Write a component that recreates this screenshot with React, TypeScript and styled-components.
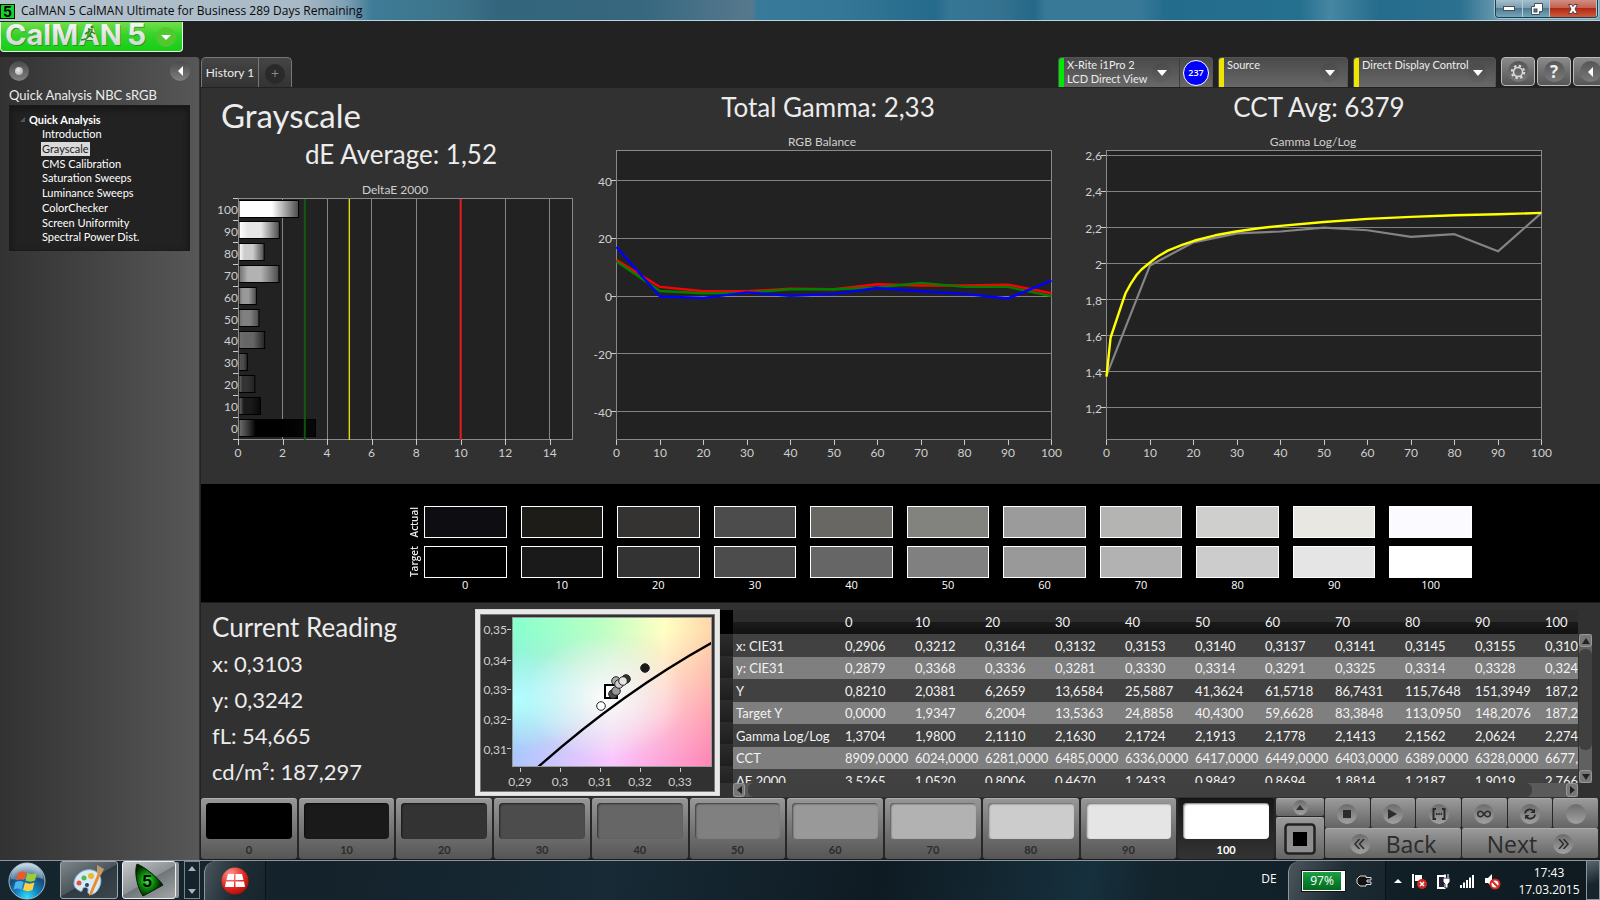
import React from "react";
import styled, { createGlobalStyle } from "styled-components";

const Global = createGlobalStyle`
  *, *::before, *::after { box-sizing: border-box; }
  body { margin: 0; background: #222; color: #ececec; font-family: Lato, "Liberation Sans", sans-serif; font-size: 13px; overflow-x: hidden; }
  button { font: inherit; color: inherit; border: 0; padding: 0; margin: 0; background: none; cursor: pointer; }
  h1, h2, p { margin: 0; font-weight: 400; }
  svg { display: block; flex-shrink: 0; }
`;

const system = `"Open Sans", "Noto Sans", sans-serif`;
const LEVELS = [0, 10, 20, 30, 40, 50, 60, 70, 80, 90, 100];
const GRAYS = ["#000", "#1a1a1a", "#333", "#4c4c4c", "#666", "#808080", "#999", "#b2b2b2", "#ccc", "#e5e5e5", "#fff"];
const ACTUAL = ["#0d0d12", "#1d1c19", "#353331", "#4c4c4c", "#686764", "#82827f", "#9b9b9b", "#b4b4b3", "#cfcfcd", "#e8e7e2", "#fafaff"];

/* ---------- frame ---------- */
const Page = styled.div`
  min-height: 100vh; display: flex; flex-direction: column; overflow: hidden;
`;
const TitleBar = styled.header`
  height: 22px; display: flex; align-items: flex-start; justify-content: space-between;
  border-bottom: 1px solid #222; box-shadow: inset 0 -1px #b8d3df;
  background:
    radial-gradient(ellipse at 404px 18px, rgba(160,127,116,.8) 0, rgba(160,127,116,0) 16px),
    linear-gradient(90deg, #b4c2cc 0, #a9bac6 300px, #7fa0b4 345px, #3f7c97 372px, #3c7289 460px, #33657d 500px, #36677f 640px, #57798e 752px, #377a9a 757px, #357797 840px, #256b8b 935px, #367796 950px, #34728f 1000px, #256888 1035px, #387997 1045px, #387998 1140px, #246c8c 1165px, #26708f 1300px, #4687a3 1330px, #256b8b 1380px, #2c7190 1460px, #6d9bb1 1500px, #7da7ba 100%);
`;
const WindowTitle = styled.h1`
  display: flex; align-items: center; gap: 6px; height: 21px; color: #08080c;
  font: 400 12px/21px ${system};
`;
const WindowButtons = styled.div`
  display: flex; height: 18px; margin-right: 2px; border: 1px solid #173f52; border-top: 0;
  border-radius: 0 0 4px 4px; overflow: hidden; box-shadow: 0 0 0 1px #a5c3d2;
`;
const WindowButton = styled.button<{ $close?: boolean }>`
  width: ${p => (p.$close ? 47 : 27)}px; display: grid; place-items: center;
  border-right: 1px solid #b4cbd6;
  background: ${p => p.$close
    ? "linear-gradient(#cf8f83 0, #c56150 45%, #b02a16 50%, #d05a3a 100%)"
    : "linear-gradient(#a5bfcc 0, #7c9fb1 45%, #4f7c93 50%, #76a6b8 100%)"};
`;
const Brand = styled.div`
  height: 35px; background: #222;
`;
const LogoButton = styled.button`
  width: 183px; height: 30px; display: flex; align-items: center; gap: 7px; padding-left: 4px;
  border: 1px solid #eaf8e6; border-top: 0; border-radius: 0 0 4px 4px;
  background: linear-gradient(#74de4a, #35d22a 45%, #14cf14);
`;
const Body = styled.div`
  flex: 1; display: grid; grid-template-columns: 200px minmax(0, 1fr); gap: 1px;
`;

/* ---------- sidebar ---------- */
const Sidebar = styled.aside`
  padding: 4px 9px; border-top-right-radius: 4px; border-right: 1px solid #333;
  background: linear-gradient(90deg, #323232, #575757);
`;
const SideTop = styled.div`
  display: flex; justify-content: space-between;
`;
const Knob = styled.button`
  width: 20px; height: 20px; border-radius: 50%; display: grid; place-items: center;
  background: linear-gradient(#4a4a4a, #808080);
`;
const Bead = styled.i`
  width: 8px; height: 8px; border-radius: 50%; background: radial-gradient(circle at 40% 40%, #eee, #999);
`;
const SideTitle = styled.h2`
  font-size: 13px; line-height: 20px; padding-top: 4px; white-space: nowrap;
`;
const Tree = styled.nav`
  height: 146px; padding: 5px 10px; background: #222; border: 1px solid #1b1b1b;
  box-shadow: inset 0 3px 6px #151515; color: #fff; font-size: 11px;
`;
const TreeRoot = styled.div`
  display: flex; align-items: center; gap: 4px; height: 16px; font-weight: 700; font-size: 11px;
`;
const TreeList = styled.ul`
  list-style: none; margin: 0; padding: 0 0 0 21px; height: 118px; display: grid; grid-auto-rows: 1fr;
`;
const TreeLink = styled.a<{ $on?: boolean }>`
  display: inline-block; line-height: 14px; padding: 0 1px; text-decoration: none;
  color: ${p => (p.$on ? "#222" : "#fff")}; background: ${p => (p.$on ? "#dadada" : "none")};
`;

/* ---------- tab strip ---------- */
const Strip = styled.div`
  height: 31px; display: flex; justify-content: space-between; background: #222;
`;
const Tabs = styled.div`
  display: flex; height: 30px; border: 1px solid #777; border-bottom: 0; border-radius: 5px 5px 0 0;
  background: linear-gradient(#454545, #333);
`;
const Tab = styled.button<{ $add?: boolean }>`
  width: ${p => (p.$add ? 33 : 56)}px; font-size: 12px; white-space: nowrap;
  display: grid; place-items: center; border-left: ${p => (p.$add ? "1px solid #777" : "0")};
`;
const AddMark = styled.span`
  width: 20px; height: 20px; margin-top: 3px; border-radius: 50%; background: #2a2a2a; color: #888;
  text-align: center; font: 14px/19px ${system};
`;
const Devices = styled.div`
  display: flex; gap: 5px; margin-right: -4px;
`;
const Device = styled.div<{ $w: number }>`
  width: ${p => p.$w}px; height: 30px; display: flex; border-radius: 4px 4px 0 0; overflow: hidden;
  border: 1px solid #555; border-bottom: 0; background: linear-gradient(#4a4a4a, #686868);
`;
const Lamp = styled.i<{ $c: string }>`
  width: 5px; flex-shrink: 0; background: ${p => p.$c};
`;
const DeviceButton = styled.button`
  flex: 1; display: flex; justify-content: space-between; align-items: flex-start; text-align: left;
  padding: 0 8px 0 3px; font-size: 11px; line-height: 14px; white-space: nowrap;
`;
const Drop = styled.span`
  width: 19px; height: 20px; margin-top: 5px; border-radius: 50%; display: grid; place-items: center;
  background: linear-gradient(#4a4a4a, #606060); margin-left: -4px;
`;
const Counter = styled.div`
  width: 33px; border-left: 1px solid #3d3d3d; display: grid; place-items: center;
`;
const Count = styled.span`
  width: 26px; height: 26px; border-radius: 50%; border: 1px solid #fff; background: #0000fb;
  color: #fff; font: 600 9px/24px ${system}; text-align: center;
`;
const ToolButton = styled.button`
  width: 34px; height: 29px; border: 1px solid #bbb; border-radius: 4px; display: grid; place-items: center;
  background: linear-gradient(#8a8a8a, #555); margin-right: -3px; flex-shrink: 0;
`;
const Round = styled.span`
  width: 21px; height: 21px; border-radius: 50%; display: grid; place-items: center; color: #eee;
  background: linear-gradient(#555, #7a7a7a); font: 700 17px/21px ${system};
`;

/* ---------- chart area ---------- */
const Charts = styled.section`
  display: grid; grid-template-columns: 389fr 480fr 530fr; background: #313131;
`;
const ChartColumn = styled.div`
  min-width: 0;
`;
const PageHeading = styled.h1`
  padding: 7px 0 1px 20px; font-size: 33px; line-height: 40px;
`;
const Metric = styled.h2<{ $tall?: boolean; $right?: number; $left?: number }>`
  font-size: 26px; line-height: ${p => (p.$tall ? 38 : 36)}px; text-align: center;
  padding: 0 ${p => p.$right || 0}px 0 ${p => p.$left || 0}px;
`;
const Plot = styled.svg`
  width: 100%; height: auto; font-size: 12px; fill: #cfcfcf;
`;

/* ---------- swatches ---------- */
const SwatchBand = styled.section`
  height: 119px; background: #000; padding: 22px 128px 0 203px;
  border-bottom: 1px solid #1a1a1a;
`;
const SwatchRow = styled.div`
  display: grid; grid-template-columns: 20px minmax(0, 1fr); align-items: center; margin-bottom: 8px;
`;
const RowName = styled.span`
  writing-mode: vertical-rl; transform: rotate(180deg); font: 600 10px/20px ${system}; text-align: center;
  padding-left: 2px;
`;
const SwatchGrid = styled.div`
  display: grid; grid-template-columns: repeat(11, minmax(0, 1fr)); gap: 14px; color: #fff;
  font: 11px/14px ${system}; text-align: center;
`;
const Swatch = styled.div<{ $c: string }>`
  height: 32px; border: 1px solid #fff; background: ${p => p.$c};
`;
const SwatchLabels = styled(SwatchGrid)`
  margin: -8px 0 0 20px;
`;

/* ---------- readings ---------- */
const Lower = styled.section`
  display: grid; grid-template-columns: 274px 245px minmax(0, 1fr); height: 195px; background: #313131;
`;
const Reading = styled.div`
  padding: 5px 0 0 11px; font-size: 22px; line-height: 36px;
`;
const ReadingTitle = styled.h2`
  font-size: 26px; line-height: 38px;
`;
const Cie = styled.svg`
  width: 245px; height: 187px; margin-top: 6px; font-size: 12px; fill: #cfcfcf;
`;
const Grid = styled.div`
  display: grid; grid-template-columns: 13px minmax(0, 1fr) 22px; grid-template-rows: 24px 149px 14px; padding-top: 7px;
`;
const Gutter = styled.div<{ $head?: boolean }>`
  background: ${p => (p.$head ? "#000" : "repeating-linear-gradient(#2c2c2c 0, #1e1e1e 22px)")};
`;
const TableClip = styled.div`
  grid-row: 1 / 3; grid-column: 2; overflow: hidden;
`;
const Table = styled.table`
  width: 879px; table-layout: fixed; border-collapse: collapse; font-size: 13px; white-space: nowrap; color: #f2f2f2;
  th { font-weight: 400; text-align: left; }
  th, td { padding: 0 0 0 3px; }
  th:first-child { width: 109px; }
  thead tr { height: 24px; background: linear-gradient(#2d2d2d 50%, #1b1b1b 50%, #111); }
  tbody tr { height: 22px; background: #7f7f7f; }
  tbody tr:nth-child(odd) { height: 23px; background: #414141; }
`;
const VScroll = styled.div`
  grid-row: 2; grid-column: 3; width: 13px; margin-left: 1px; background: #606060;
  display: flex; flex-direction: column; gap: 2px;
`;
const HScroll = styled.div`
  grid-row: 3; grid-column: 2; background: #5a5a5a; display: flex; gap: 3px;
`;
const ScrollArrow = styled.button`
  min-width: 12px; min-height: 13px; border-radius: 3px; border: 1px solid #999; background: #777;
  display: grid; place-items: center;
`;
const Thumb = styled.div<{ $grow: number }>`
  flex: ${p => p.$grow} 1 0; border-radius: 6px; background: #404040;
`;
const Rest = styled.div<{ $grow: number }>`
  flex: ${p => p.$grow} 1 0;
`;

/* ---------- pattern bar ---------- */
const PatternBar = styled.section`
  height: 62px; display: grid; grid-template-columns: minmax(0, 1fr) 49px 275px; background: #272727;
  border-bottom: 2px solid #1c1c1c;
`;
const Patterns = styled.div`
  display: grid; grid-template-columns: repeat(11, minmax(0, 1fr));
`;
const Pattern = styled.button<{ $on?: boolean }>`
  margin-right: 2px; padding: 4px 5px 0; border-radius: 3px; font-size: 11px; font-weight: 700;
  display: flex; flex-direction: column; color: ${p => (p.$on ? "#fff" : "#2c2c2c")};
  border-top: 1px solid ${p => (p.$on ? "#111" : "#b0b0b0")};
  background: ${p => (p.$on ? "linear-gradient(#181818, #333)" : "linear-gradient(#969696, #555)")};
`;
const Chip = styled.span<{ $c: string }>`
  width: 100%; height: 36px; border-radius: 4px; background: ${p => p.$c};
  box-shadow: inset 1px 1px 2px rgba(0,0,0,.55);
`;
const ChipLabel = styled.span`
  width: 100%; line-height: 18px; padding-top: 2px; text-align: center;
`;
const Picker = styled.div`
  display: grid; grid-template-rows: 18px 1fr; gap: 1px; margin-right: 1px;
`;
const Metal = styled.button`
  display: flex; align-items: center; justify-content: center; gap: 16px; border-radius: 2px; color: #2b2b2b;
  background: linear-gradient(#9a9a9a, #646464); border-top: 1px solid #aaa;
`;
const Disc = styled.span<{ $small?: boolean }>`
  width: ${p => (p.$small ? 15 : 20)}px; height: ${p => (p.$small ? 15 : 20)}px; border-radius: 50%;
  display: grid; place-items: center; background: linear-gradient(#6c6c6c, #a2a2a2);
`;
const Transport = styled.div`
  display: grid; grid-template-columns: repeat(6, minmax(0, 1fr)); grid-template-rows: 30px 30px; column-gap: 1px;
  padding-right: 2px;
`;
const Wide = styled(Metal)`
  grid-column: span 3; font: 500 23px/28px ${system};
`;

/* ---------- taskbar ---------- */
const Taskbar = styled.footer`
  height: 40px; display: flex; border-top: 1px solid #8b979d; font-family: ${system}; color: #fff;
  background: linear-gradient(100deg, #16262e 0, #14222b 20%, #172a35 38%, #0f1b23 55%, #16303d 68%, #13242d 72%, #0f1a20 100%);
`;
const StartButton = styled.button`
  width: 54px; display: grid; place-items: center; margin-right: 6px;
`;
const TaskButton = styled.button<{ $on?: boolean }>`
  width: ${p => (p.$on ? 54 : 58)}px; height: 38px; margin-right: 4px; border-radius: 3px; display: grid; place-items: center;
  border: 1px solid ${p => (p.$on ? "#eee" : "#9ea5a9")};
  background: ${p => (p.$on ? "linear-gradient(150deg, #c5c8ca, #8c9194 50%, #6f7679 51%, #a3a6a8)" : "linear-gradient(150deg, #7e868a, #4b555b 50%, #2e3a41 51%, #3c474d)")};
  box-shadow: ${p => (p.$on ? "4px 0 0 -1px #8d9396" : "none")};
`;
const Spinner = styled.div`
  width: 16px; height: 38px; margin: 0 4px; border: 1px solid #77848b; display: flex; flex-direction: column;
  justify-content: space-between; align-items: center; padding: 4px 0;
`;
const Dock = styled.div<{ $w: number }>`
  width: ${p => p.$w}px; display: flex; align-items: center; justify-content: center; gap: 10px;
  border-left: 1px solid #8b979d; border-right: 1px solid #0b1216; border-top-left-radius: 12px;
  background: linear-gradient(110deg, #4b565c, #1d2b33 55%, #18252c);
`;
const Space = styled.div` flex: 1; `;
const Language = styled.button`
  width: 34px; margin-right: 2px; font-size: 12px; line-height: 32px; padding-bottom: 4px;
`;
const Battery = styled.div`
  width: 43px; height: 20px; border: 1px solid #fff; outline: 1px solid #111; border-right-width: 4px; background: linear-gradient(#1f9d47, #0a8430 50%, #04691f);
  font-size: 12px; line-height: 17px; text-align: center;
`;
const Tray = styled.div`
  display: flex; align-items: center; gap: 8px; width: 128px; padding-left: 8px;
`;
const Clock = styled.time`
  width: 70px; text-align: center; font-size: 12px; line-height: 17px; padding-top: 3px;
`;
const ShowDesktop = styled.button`
  width: 14px; margin-left: 2px; border: 1px solid #8b979d; border-top: 0;
  background: linear-gradient(160deg, #5b686f, #17242b 60%);
`;

/* ---------- drawings ---------- */
const Tri = ({ d, c = "#fff", w = 10, h = 6 }: { d: "up" | "down" | "left" | "right"; c?: string; w?: number; h?: number }) => {
  const pts = { up: `0,${h} ${w},${h} ${w / 2},0`, down: `0,0 ${w},0 ${w / 2},${h}`, left: `${w},0 ${w},${h} 0,${h / 2}`, right: `0,0 0,${h} ${w},${h / 2}` }[d];
  return <svg width={w} height={h}><polygon points={pts} fill={c} /></svg>;
};

const DELTA = [2.766, 1.9019, 1.2187, 1.8814, 0.8694, 0.9842, 1.2433, 0.467, 0.8006, 1.052, 3.5265];

function DeltaChart() {
  const x0 = 37, y0 = 26, w = 334, h = 241, step = h / 11;
  const sx = (v: number) => x0 + (v * w) / 15;
  return (
    <Plot viewBox="0 0 389 312" role="img" aria-label="DeltaE 2000">
      <defs>
        {GRAYS.map((c, i) => (
          <linearGradient id={`bar${i}`} key={i}>
            <stop offset="0" stopColor={i < 8 ? "#777" : "#fff"} stopOpacity={i < 8 ? 0.9 : 1} />
            <stop offset=".22" stopColor={c} /><stop offset=".55" stopColor={c} />
            <stop offset="1" stopColor={i < 2 ? "#080808" : i < 5 ? "#222" : "#4a4a4a"} />
          </linearGradient>
        ))}
      </defs>
      <text x="194" y="22" textAnchor="middle">DeltaE 2000</text>
      <rect x={x0 + 0.5} y={y0 + 0.5} width={w} height={h} fill="#222" stroke="#8a8a8a" />
      <g shapeRendering="crispEdges">
        {[2, 4, 6, 8, 10, 12, 14].map(v => <path key={v} d={`M${sx(v)} ${y0}V${y0 + h}`} stroke="#868686" />)}
        {[0, 2, 4, 6, 8, 10, 12, 14].map(v => <path key={v} d={`M${sx(v) + 0.5} ${y0 + h}v6`} stroke="#ccc" />)}
        {Array.from({ length: 12 }, (_, i) => <path key={i} d={`M${x0 - 5} ${Math.round(y0 + i * step) + 0.5}h5`} stroke="#ccc" />)}
      </g>
      {DELTA.map((v, i) => (
        <rect key={i} x={x0 + 1} y={Math.floor(y0 + i * step) + 2.5} width={sx(v) - x0 - 2} height="17" fill={`url(#bar${10 - i})`} stroke="#000" />
      ))}
      <path d={`M${x0 + 0.5} ${y0}v${h}`} stroke="#8a8a8a" />
      <g strokeWidth="2">
        <path d={`M${sx(3)} ${y0 + 1}v${h}`} stroke="#0a640a" strokeOpacity=".85" />
        <path d={`M${sx(5)} ${y0 + 1}v${h}`} stroke="#e0d818" strokeWidth="1.4" />
        <path d={`M${sx(10)} ${y0 + 1}v${h}`} stroke="#e81c1c" />
      </g>
      {DELTA.map((_, i) => <text key={i} x={x0} y={y0 + i * step + 16} textAnchor="end">{100 - i * 10}</text>)}
      {[0, 2, 4, 6, 8, 10, 12, 14].map(v => <text key={v} x={sx(v)} y="285" textAnchor="middle">{v}</text>)}
    </Plot>
  );
}

type Series = { color: string; width: number; pts: number[][] };
function LineChart({ title, viewW, x0, titleX, lo, hi, ticks, series }: {
  title: string; viewW: number; x0: number; titleX: number; lo: number; hi: number; ticks: number[]; series: Series[];
}) {
  const y0 = 24, w = 435, h = 289;
  const sx = (v: number) => x0 + 0.5 + (v * w) / 100;
  const sy = (v: number) => y0 + 0.5 + ((hi - v) * h) / (hi - lo);
  return (
    <Plot viewBox={`0 0 ${viewW} 358`} role="img" aria-label={title}>
      <text x={titleX} y="20" textAnchor="middle">{title}</text>
      <rect x={x0 + 0.5} y={y0 + 0.5} width={w} height={h} fill="#222" stroke="#8a8a8a" />
      <g shapeRendering="crispEdges">
        {ticks.map(v => <g key={v}><path d={`M${x0} ${sy(v)}h${w}`} stroke="#828282" /><path d={`M${x0 - 5} ${sy(v)}h5`} stroke="#ccc" /></g>)}
        {LEVELS.map(v => <path key={v} d={`M${sx(v)} ${y0 + h + 1}v5`} stroke="#ccc" />)}
      </g>
      {series.map((s, i) => (
        <polyline key={i} points={s.pts.map(p => `${sx(p[0])},${sy(p[1])}`).join(" ")} fill="none" stroke={s.color} strokeWidth={s.width} strokeLinejoin="round" />
      ))}
      {ticks.map(v => <text key={v} x={x0 - 4} y={sy(v) + 5} textAnchor="end">{String(v).replace(".", ",")}</text>)}
      {LEVELS.map(v => <text key={v} x={sx(v)} y="331" textAnchor="middle">{v}</text>)}
    </Plot>
  );
}
const byLevel = (v: number[]) => v.map((y, i) => [i * 10, y]);
const RGB: Series[] = [
  { color: "#f00", width: 2.4, pts: byLevel([12.5, 3.2, 1.7, 1.7, 2.6, 2.4, 4.1, 3.7, 3.7, 4, 1]) },
  { color: "#008000", width: 2.4, pts: byLevel([12, 1.8, 1, 1.2, 2.4, 2.4, 3, 4.6, 3.2, 3.2, 0]) },
  { color: "#00f", width: 2.4, pts: byLevel([17, -0.1, -0.6, 1.3, 0.1, 0.8, 2.8, 1.7, 0.8, -0.8, 5.4]) },
];
const GAMMA: Series[] = [
  { color: "#848484", width: 2.2, pts: byLevel([1.38, 1.99, 2.118, 2.168, 2.178, 2.2, 2.185, 2.148, 2.163, 2.068, 2.281]) },
  { color: "#ff0", width: 2.4, pts: [[0, 1.374], [0.93, 1.589], [3.4, 1.767], [4.4, 1.837], [5.6, 1.889], [6.9, 1.937], [8.1, 1.969], [10, 2.006], [11.8, 2.039], [14.1, 2.072], [17.4, 2.104], [20.3, 2.128], [25, 2.157], [29.8, 2.178], [35, 2.196], [40, 2.209], [50, 2.231], [60, 2.248], [70, 2.259], [80, 2.268], [90, 2.274], [100, 2.281]] },
];

function CieChart() {
  return (
    <Cie viewBox="0 0 245 187" role="img" aria-label="CIE chromaticity">
      <defs>
        <linearGradient id="cieTop"><stop offset="0" stopColor="#86ffcf" /><stop offset=".45" stopColor="#bcffc4" /><stop offset=".76" stopColor="#ffffc4" /><stop offset="1" stopColor="#ffd6a8" /></linearGradient>
        <linearGradient id="cieBottom"><stop offset="0" stopColor="#a9c6ff" /><stop offset=".5" stopColor="#fbc6ff" /><stop offset="1" stopColor="#ff86b4" /></linearGradient>
        <linearGradient id="cieFade" x1="0" y1="0" x2="0" y2="1"><stop offset=".1" stopColor="#000" /><stop offset=".95" stopColor="#fff" /></linearGradient>
        <mask id="cieMask"><rect x="37" y="8" width="200" height="150" fill="url(#cieFade)" /></mask>
        <radialGradient id="cieWhite"><stop offset="0" stopColor="#fff" stopOpacity=".9" /><stop offset=".3" stopColor="#fff" stopOpacity=".6" /><stop offset="1" stopColor="#fff" stopOpacity="0" /></radialGradient>
        <radialGradient id="cieCyan"><stop offset="0" stopColor="#b4ffff" /><stop offset="1" stopColor="#b4ffff" stopOpacity="0" /></radialGradient>
        <clipPath id="cieClip"><rect x="38" y="9" width="199" height="149" /></clipPath>
      </defs>
      <rect width="245" height="187" fill="#d8d8d8" />
      <rect x="1" y="1" width="243" height="185" fill="#e8e8e8" />
      <rect x="5.5" y="5.5" width="234" height="177" fill="#313131" stroke="#777" />
      <g clipPath="url(#cieClip)">
        <rect x="37" y="8" width="200" height="150" fill="url(#cieTop)" />
        <rect x="37" y="8" width="200" height="150" fill="url(#cieBottom)" mask="url(#cieMask)" />
        <ellipse cx="38" cy="90" rx="90" ry="50" fill="url(#cieCyan)" />
        <ellipse cx="130" cy="88" rx="80" ry="62" fill="url(#cieWhite)" />
        <path d="M62 159Q146 84 238 33" fill="none" stroke="#000" strokeWidth="2.4" />
      </g>
      <rect x="37.5" y="8.5" width="199" height="149" fill="none" stroke="#999" />
      <path d="M45.5 159v4M85.5 159v4M125.5 159v4M165.500 159v4M205.500 159v4M32 20.500h4M32 51.500h4M32 80.500h4M32 110.500h4M32 139.500h4" stroke="#ccc" />
      <rect x="130" y="76" width="12" height="13" fill="#fff" stroke="#000" strokeWidth="2" />
      {[["#4c4c4c", 138, 85], ["#999", 141, 82], ["#333", 151, 70], ["#1a1a1a", 170, 59], ["#aaa", 141, 72], ["#ccc", 144, 75], ["#e5e5e5", 148, 72], ["#fff", 126, 97]].map(([c, x, y], i) => (
        <circle key={i} cx={x} cy={y} r="4.3" fill={String(c)} stroke="#222" />
      ))}
      {["0,35", "0,34", "0,33", "0,32", "0,31"].map((t, i) => <text key={t} x="32" y={[25, 56, 85, 115, 145][i]} textAnchor="end">{t}</text>)}
      {["0,29", "0,3", "0,31", "0,32", "0,33"].map((t, i) => <text key={t} x={45 + i * 40} y="177" textAnchor="middle">{t}</text>)}
    </Cie>
  );
}

const ROWS: [string, string[]][] = [
  ["x: CIE31", ["0,2906", "0,3212", "0,3164", "0,3132", "0,3153", "0,3140", "0,3137", "0,3141", "0,3145", "0,3155", "0,3103"]],
  ["y: CIE31", ["0,2879", "0,3368", "0,3336", "0,3281", "0,3330", "0,3314", "0,3291", "0,3325", "0,3314", "0,3328", "0,3242"]],
  ["Y", ["0,8210", "2,0381", "6,2659", "13,6584", "25,5887", "41,3624", "61,5718", "86,7431", "115,7648", "151,3949", "187,2970"]],
  ["Target Y", ["0,0000", "1,9347", "6,2004", "13,5363", "24,8858", "40,4300", "59,6628", "83,3848", "113,0950", "148,2076", "187,2970"]],
  ["Gamma Log/Log", ["1,3704", "1,9800", "2,1110", "2,1630", "2,1724", "2,1913", "2,1778", "2,1413", "2,1562", "2,0624", "2,2740"]],
  ["CCT", ["8909,0000", "6024,0000", "6281,0000", "6485,0000", "6336,0000", "6417,0000", "6449,0000", "6403,0000", "6389,0000", "6328,0000", "6677,0000"]],
  ["ΔE 2000", ["3,5265", "1,0520", "0,8006", "0,4670", "1,2433", "0,9842", "0,8694", "1,8814", "1,2187", "1,9019", "2,7660"]],
];

const LogoArt = styled.svg`
  overflow: visible;
`;
const Logo = () => (
  <LogoArt width="144" height="28" viewBox="0 0 144 28">
    <defs><linearGradient id="silver" x1="0" y1="0" x2="0" y2="1"><stop offset="0" stopColor="#fff" /><stop offset="1" stopColor="#c9cdc9" /></linearGradient></defs>
    <g fontFamily="Inter, sans-serif" fontWeight="700">
      <g fill="#2b7a22" opacity=".7"><text x="1" y="23" fontSize="29">CalMAN</text><text x="123" y="23" fontSize="30">5</text></g>
      <g fill="url(#silver)"><text x="0" y="22" fontSize="29">CalMAN</text><text x="122" y="22" fontSize="30">5</text></g>
    </g>
    <path d="M83 6l4 1-2 5 3 3M85 8l-5 3M85 12l-4 4-5 1M86 8l4 3" stroke="#2c8a24" strokeWidth="1.500" fill="none" />
    <circle cx="87" cy="4" r="1.500" fill="#2c8a24" />
  </LogoArt>
);

const NAV = ["Introduction", "Grayscale", "CMS Calibration", "Saturation Sweeps", "Luminance Sweeps", "ColorChecker", "Screen Uniformity", "Spectral Power Dist."];

export default function App() {
  return (
    <Page>
      <Global />
      <TitleBar>
        <WindowTitle>
          <svg width="15" height="16"><rect y="1" width="15" height="15" fill="#031503" /><rect x="1" y="2" width="13" height="13" fill="#19e82b" opacity=".9" /><text x="3" y="14" fontSize="14" fontWeight="700" fontFamily="Inter, sans-serif" fill="#000">5</text></svg>
          CalMAN 5 CalMAN Ultimate for Business 289 Days Remaining
        </WindowTitle>
        <WindowButtons>
          <WindowButton aria-label="Minimize"><svg width="12" height="6"><rect x=".5" y=".5" width="11" height="4" fill="#fff" stroke="#45505c" /></svg></WindowButton>
          <WindowButton aria-label="Restore"><svg width="13" height="12"><path d="M4.500 .5h8v8h-3v3h-8v-8h3z" fill="#fff" stroke="#45505c" /><rect x="4" y="6" width="3" height="3" fill="#56758a" stroke="#45505c" /></svg></WindowButton>
          <WindowButton $close aria-label="Close"><svg width="14" height="12"><path d="M2.500 1.500h3l1.500 2 1.500-2h3L9 6l2.500 4.500h-3L7 8.500l-1.500 2h-3L5 6z" fill="#fff" stroke="#5a3a42" /></svg></WindowButton>
        </WindowButtons>
      </TitleBar>
      <Brand>
        <LogoButton aria-label="CalMAN 5 menu">
          <Logo />
          <svg width="20" height="20"><circle cx="10" cy="10" r="10" fill="#52c830" /><path d="M5 8h10l-5 5z" fill="#fff" /></svg>
        </LogoButton>
      </Brand>
      <Body>
        <Sidebar>
          <SideTop>
            <Knob aria-label="Record"><Bead /></Knob>
            <Knob aria-label="Collapse"><Tri d="left" w={5} h={10} /></Knob>
          </SideTop>
          <SideTitle>Quick Analysis NBC sRGB</SideTitle>
          <Tree>
            <TreeRoot><svg width="5" height="5"><path d="M5 0v5H0z" fill="#555" /></svg>Quick Analysis</TreeRoot>
            <TreeList>{NAV.map(n => <li key={n}><TreeLink href="#" $on={n === "Grayscale"}>{n}</TreeLink></li>)}</TreeList>
          </Tree>
        </Sidebar>
        <main>
          <Strip>
            <Tabs><Tab>History 1</Tab><Tab $add aria-label="Add tab"><AddMark>+</AddMark></Tab></Tabs>
            <Devices>
              <Device $w={155}><Lamp $c="#00e800" /><DeviceButton><span>X-Rite i1Pro 2<br />LCD Direct View</span><Drop><Tri d="down" /></Drop></DeviceButton><Counter><Count>237</Count></Counter></Device>
              <Device $w={130}><Lamp $c="#eee600" /><DeviceButton>Source<Drop><Tri d="down" /></Drop></DeviceButton></Device>
              <Device $w={143}><Lamp $c="#eee600" /><DeviceButton>Direct Display Control<Drop><Tri d="down" /></Drop></DeviceButton></Device>
              <ToolButton aria-label="Settings"><Round><svg width="16" height="16" viewBox="0 0 16 16"><circle cx="8" cy="8" r="4.500" fill="none" stroke="#ddd" strokeWidth="1.500" /><circle cx="8" cy="8" r="6.200" fill="none" stroke="#ddd" strokeWidth="2" strokeDasharray="2.400 2.470" /></svg></Round></ToolButton>
              <ToolButton aria-label="Help"><Round>?</Round></ToolButton>
              <ToolButton aria-label="Collapse"><Round><Tri d="left" w={5} h={10} /></Round></ToolButton>
            </Devices>
          </Strip>
          <Charts>
            <ChartColumn>
              <PageHeading>Grayscale</PageHeading>
              <Metric $left={11}>dE Average: 1,52</Metric>
              <DeltaChart />
            </ChartColumn>
            <ChartColumn>
              <Metric $tall $right={4}>Total Gamma: 2,33</Metric>
              <LineChart title="RGB Balance" viewW={480} x0={26} titleX={232} lo={-49.6} hi={50.4} ticks={[40, 20, 0, -20, -40]} series={RGB} />
            </ChartColumn>
            <ChartColumn>
              <Metric $tall $right={32}>CCT Avg: 6379</Metric>
              <LineChart title="Gamma Log/Log" viewW={530} x0={36} titleX={243} lo={1.025} hi={2.627} ticks={[2.6, 2.4, 2.2, 2, 1.8, 1.6, 1.4, 1.2]} series={GAMMA} />
            </ChartColumn>
          </Charts>
          <SwatchBand>
            <SwatchRow><RowName>Actual</RowName><SwatchGrid>{ACTUAL.map(c => <Swatch key={c} $c={c} />)}</SwatchGrid></SwatchRow>
            <SwatchRow><RowName>Target</RowName><SwatchGrid>{GRAYS.map(c => <Swatch key={c} $c={c} />)}</SwatchGrid></SwatchRow>
            <SwatchLabels>{LEVELS.map(v => <span key={v}>{v}</span>)}</SwatchLabels>
          </SwatchBand>
          <Lower>
            <Reading>
              <ReadingTitle>Current Reading</ReadingTitle>
              <p>x: 0,3103</p><p>y: 0,3242</p><p>fL: 54,665</p><p>cd/m²: 187,297</p>
            </Reading>
            <CieChart />
            <Grid>
              <Gutter $head /><TableClip>
                <Table>
                  <thead><tr><th />{LEVELS.map(v => <th key={v} scope="col">{v}</th>)}</tr></thead>
                  <tbody>{ROWS.map(([n, vals]) => <tr key={n}><th scope="row">{n}</th>{vals.map((v, i) => <td key={i}>{v}</td>)}</tr>)}</tbody>
                </Table>
              </TableClip><Rest $grow={0} />
              <Gutter />
              <VScroll><ScrollArrow aria-label="Scroll up"><Tri d="up" c="#222" w={8} h={6} /></ScrollArrow><Thumb $grow={103} /><Rest $grow={16} /><ScrollArrow aria-label="Scroll down"><Tri d="down" c="#222" w={8} h={6} /></ScrollArrow></VScroll>
              <HScroll><ScrollArrow aria-label="Scroll left"><Tri d="left" c="#222" w={5} h={8} /></ScrollArrow><Thumb $grow={785} /><Rest $grow={28} /><ScrollArrow aria-label="Scroll right"><Tri d="right" c="#222" w={5} h={8} /></ScrollArrow></HScroll>
            </Grid>
          </Lower>
          <PatternBar>
            <Patterns>{LEVELS.map((v, i) => <Pattern key={v} $on={v === 100}><Chip $c={GRAYS[i]} /><ChipLabel>{v}</ChipLabel></Pattern>)}</Patterns>
            <Picker>
              <Metal aria-label="More patterns"><Disc $small><Tri d="up" c="#333" w={8} h={5} /></Disc></Metal>
              <Metal aria-label="Window pattern"><svg width="32" height="32"><rect x="1.500" y="1.500" width="29" height="29" rx="3" fill="#8e8e8e" stroke="#222" strokeWidth="2.500" /><rect x="9" y="9" width="14" height="14" fill="#000" /></svg></Metal>
            </Picker>
            <Transport>
              <Metal aria-label="Stop"><Disc><svg width="8" height="8"><rect width="8" height="8" fill="#2b2b2b" /></svg></Disc></Metal>
              <Metal aria-label="Play"><Disc><Tri d="right" c="#2b2b2b" w={9} h={10} /></Disc></Metal>
              <Metal aria-label="Read series"><Disc><svg width="14" height="12"><path d="M4 1H1.500v10H4M10 1h2.500v10H10" fill="none" stroke="#2b2b2b" strokeWidth="2" /><path d="M4 6h6" stroke="#2b2b2b" strokeWidth="2" strokeDasharray="1.500 .8" /></svg></Disc></Metal>
              <Metal aria-label="Read continuously"><Disc><svg width="14" height="8"><path d="M7 4C5.500 2 4.800 1.200 3.500 1.200a2.800 2.800 0 0 0 0 5.600C4.800 6.800 5.500 6 7 4S9.200 1.200 10.500 1.200a2.800 2.800 0 0 1 0 5.600C9.200 6.800 8.500 6 7 4z" fill="none" stroke="#2b2b2b" strokeWidth="1.500" /></svg></Disc></Metal>
              <Metal aria-label="Refresh"><Disc><svg width="12" height="12" viewBox="0 0 12 12"><path d="M1 5.500C1.500 1.500 6.500 0 9.500 3M11 6.500C10.500 10.500 5.500 12 2.500 9" fill="none" stroke="#2b2b2b" strokeWidth="1.800" /><path d="M11 .5v4.500H6.500zM1 11.500V7h4.500z" fill="#2b2b2b" /></svg></Disc></Metal>
              <Metal aria-label="Status"><Disc /></Metal>
              <Wide><Disc><svg width="11" height="10"><path d="M5.500 0L1 5l4.500 5M10 0L5.500 5l4.500 5" fill="none" stroke="#2b2b2b" strokeWidth="1.500" /></svg></Disc>Back</Wide>
              <Wide>Next<Disc><svg width="11" height="10"><path d="M1 0l4.500 5L1 10M5.500 0L10 5l-4.500 5" fill="none" stroke="#2b2b2b" strokeWidth="1.500" /></svg></Disc></Wide>
            </Transport>
          </PatternBar>
        </main>
      </Body>
      <Taskbar>
        <StartButton aria-label="Start">
          <svg width="38" height="38" viewBox="0 0 38 38">
            <defs><radialGradient id="orb" cx=".5" cy=".95" r=".9"><stop offset="0" stopColor="#2fe0ff" /><stop offset=".35" stopColor="#1583c0" /><stop offset=".7" stopColor="#164a75" /><stop offset="1" stopColor="#a9c4d6" /></radialGradient></defs>
            <circle cx="19" cy="19" r="18" fill="url(#orb)" stroke="#a3bccb" />
            <path d="M3 17a16 16 0 0 1 32 0C25 13 13 20 3 17z" fill="#fff" opacity=".3" />
            <path d="M10 11c3-2 5-2 8-.5l-2 7.500c-3-1.500-5-1.500-8 0z" fill="#ef5a24" />
            <path d="M19.500 11c3 1.500 6 1.500 9.500 0l-2 7.500c-3 1.500-6 1.500-9.500 0z" fill="#9ccb3b" />
            <path d="M7.500 20c3-1.500 5-1.500 8 0l-2 7.500c-3-1.500-5-1.500-8 0z" fill="#4fb3ef" />
            <path d="M17 20.500c3 1.500 6 1.500 9.500 0l-2 7.500c-3 1.500-6 1.500-9.500 0z" fill="#ffd042" />
          </svg>
        </StartButton>
        <TaskButton aria-label="Paint">
          <svg width="34" height="34" viewBox="0 0 34 34">
            <path d="M2 20C3 10 14 4 23 8c8 4 7 14 2 20-4 5-10 4-9 0 1-3-2-5-5-3-1 3-1 4-3 3-4-2-6-4-6-8z" fill="#d5ebf8" stroke="#8fb9d4" />
            <circle cx="7" cy="20" r="2.500" fill="#e2523c" /><circle cx="12" cy="15" r="2.500" fill="#56b947" /><circle cx="19" cy="13" r="3" fill="#f1b52c" /><circle cx="15" cy="22" r="2" fill="#26466a" />
            <path d="M26 10l3 1-9 20-3 2 1-4z" fill="#ee8a2c" /><path d="M25 2l7 4-3 6-4-2z" fill="#c59a6a" />
          </svg>
        </TaskButton>
        <TaskButton $on aria-label="CalMAN">
          <svg width="30" height="34" viewBox="0 0 30 34">
            <defs><radialGradient id="glow" cx=".42" cy=".52" r=".5"><stop offset="0" stopColor="#3cff3c" /><stop offset=".5" stopColor="#0b8a0b" /><stop offset="1" stopColor="#012601" /></radialGradient></defs>
            <path d="M3 1c8 3 21 14 26 21L9 33C3 24 0 9 3 1z" fill="url(#glow)" stroke="#041a04" />
            <text x="8" y="24" fontSize="16" fontWeight="700" fontFamily="Inter, sans-serif">5</text>
          </svg>
        </TaskButton>
        <Spinner><Tri d="up" c="#a9b3b8" w={8} h={5} /><Tri d="down" c="#a9b3b8" w={8} h={5} /></Spinner>
        <Dock $w={62}>
          <svg width="28" height="28" viewBox="0 0 28 28">
            <defs><radialGradient id="red" cx=".35" cy=".25" r=".8"><stop offset="0" stopColor="#ff9a94" /><stop offset=".6" stopColor="#e02a22" /><stop offset="1" stopColor="#b30b08" /></radialGradient></defs>
            <circle cx="14" cy="14" r="13.500" fill="url(#red)" />
            <path d="M7 7h6v6H5.500zM14.500 7H21l1.500 6h-8zM5 14.500h8V20H4zM14.500 14.500H23l1 5.500h-9.500z" fill="#fff" />
          </svg>
        </Dock>
        <Space />
        <Language>DE</Language>
        <Dock $w={98}>
          <Battery>97%</Battery>
          <svg width="17" height="14"><path d="M5 2h6v1.500h5v2.500h-4v2h4v2.500h-5V12H5L2 9V5z" fill="#111" stroke="#ddd" /></svg>
        </Dock>
        <Tray>
          <Tri d="up" w={8} h={4} />
          <svg width="18" height="18"><path d="M3 2v14" stroke="#fff" strokeWidth="2" /><path d="M5 3h7v6H5z" fill="#fff" /><circle cx="12" cy="12" r="5" fill="#d32822" /><path d="M10 10l4 4m0-4l-4 4" stroke="#fff" strokeWidth="1.500" /></svg>
          <svg width="16" height="18"><path d="M2 4h7v12H2z" fill="#223" stroke="#fff" strokeWidth="2" /><path d="M7 6h7v4l-2 2v4H9v-4L7 10z" fill="#fff" stroke="#223" /><path d="M9 2v4M12 2v4" stroke="#fff" /></svg>
          <svg width="16" height="14">{[0, 1, 2, 3, 4].map(i => <rect key={i} x={i * 3} y={11 - i * 2.5} width="2" height={3 + i * 2.5} fill="#fff" />)}</svg>
          <svg width="18" height="18"><path d="M1 6h3l4-4v13l-4-4H1z" fill="#fff" /><circle cx="11" cy="12" r="4.500" fill="#fff" stroke="#d32822" strokeWidth="2" /><path d="M8 9l6 6" stroke="#d32822" strokeWidth="2" /></svg>
        </Tray>
        <Clock>17:43<br />17.03.2015</Clock>
        <ShowDesktop aria-label="Show desktop" />
      </Taskbar>
    </Page>
  );
}
